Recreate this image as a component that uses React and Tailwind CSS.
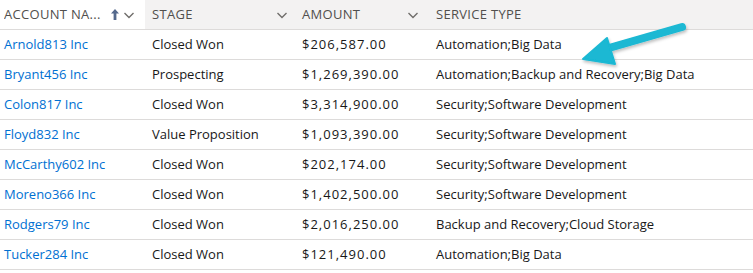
import React from "react";

const ROWS = [
    { name: "Arnold813 Inc", stage: "Closed Won", amount: "$206,587.00", service: "Automation;Big Data" },
    { name: "Bryant456 Inc", stage: "Prospecting", amount: "$1,269,390.00", service: "Automation;Backup and Recovery;Big Data" },
    { name: "Colon817 Inc", stage: "Closed Won", amount: "$3,314,900.00", service: "Security;Software Development" },
    { name: "Floyd832 Inc", stage: "Value Proposition", amount: "$1,093,390.00", service: "Security;Software Development" },
    { name: "McCarthy602 Inc", stage: "Closed Won", amount: "$202,174.00", service: "Security;Software Development" },
    { name: "Moreno366 Inc", stage: "Closed Won", amount: "$1,402,500.00", service: "Security;Software Development" },
    { name: "Rodgers79 Inc", stage: "Closed Won", amount: "$2,016,250.00", service: "Backup and Recovery;Cloud Storage" },
    { name: "Tucker284 Inc", stage: "Closed Won", amount: "$121,490.00", service: "Automation;Big Data" },
];

const Chevron = () => (
    <svg width="12" height="12" viewBox="0 0 12 12" className="shrink-0">
        <path d="M1.5 4 L6 8.5 L10.5 4" fill="none" stroke="#706e6b" strokeWidth="1.4" />
    </svg>
);

const ArrowUp = () => (
    <svg width="10" height="13" viewBox="0 0 10 13" className="shrink-0">
        <path d="M5 1 L1 5.5 L3.6 5.5 L3.6 12 L6.4 12 L6.4 5.5 L9 5.5 Z" fill="#54698d" />
    </svg>
);

export default function App() {
    return (
        <div className="relative w-[753px] h-[273px] bg-white overflow-hidden text-[13px]" style={{ fontFamily: "'Open Sans', sans-serif" }}>
            {/* Header */}
            <div className="grid grid-cols-[145px_148px_135px_1fr] h-[30px] border-b border-[#dddbda] text-[#514f4d] uppercase tracking-[0.3px]">
                <div className="flex items-center pl-1 pr-[10px] bg-white">
                    <span className="flex-1 truncate">Account Na...</span>
                    <span className="flex items-center gap-[3px]"><ArrowUp /><Chevron /></span>
                </div>
                <div className="flex items-center pl-[7px] pr-[5px] bg-[#f3f2f2]">
                    <span className="flex-1">Stage</span>
                    <Chevron />
                </div>
                <div className="flex items-center pl-[9px] pr-[9px] bg-[#f3f2f2]">
                    <span className="flex-1">Amount</span>
                    <Chevron />
                </div>
                <div className="flex items-center pl-2 bg-[#f3f2f2]">
                    <span>Service Type</span>
                </div>
            </div>

            {/* Rows */}
            {ROWS.map((r) => (
                <div key={r.name} className="grid grid-cols-[145px_148px_135px_1fr] h-[30px] border-b border-[#dddbda] items-center text-[#181818]">
                    <div className="pl-1 text-[#0070d2] truncate">{r.name}</div>
                    <div className="pl-[7px]">{r.stage}</div>
                    <div className="pl-[9px] tracking-[1px]">{r.amount}</div>
                    <div className="pl-2">{r.service}</div>
                </div>
            ))}

            {/* Annotation arrow */}
            <svg className="absolute left-[570px] top-[18px]" width="125" height="55" viewBox="0 0 125 55">
                <defs>
                    <filter id="sh" x="-20%" y="-20%" width="140%" height="160%">
                        <feDropShadow dx="1" dy="2" stdDeviation="1.5" floodColor="#000" floodOpacity="0.25" />
                    </filter>
                </defs>
                <g filter="url(#sh)">
                    <line x1="112" y1="9" x2="32" y2="32" stroke="#1ab8d3" strokeWidth="8" strokeLinecap="round" />
                    <path d="M13 41 L37 20 L45 46 Z" fill="#1ab8d3" stroke="#1ab8d3" strokeWidth="2" strokeLinejoin="round" />
                </g>
            </svg>
        </div>
    );
}
